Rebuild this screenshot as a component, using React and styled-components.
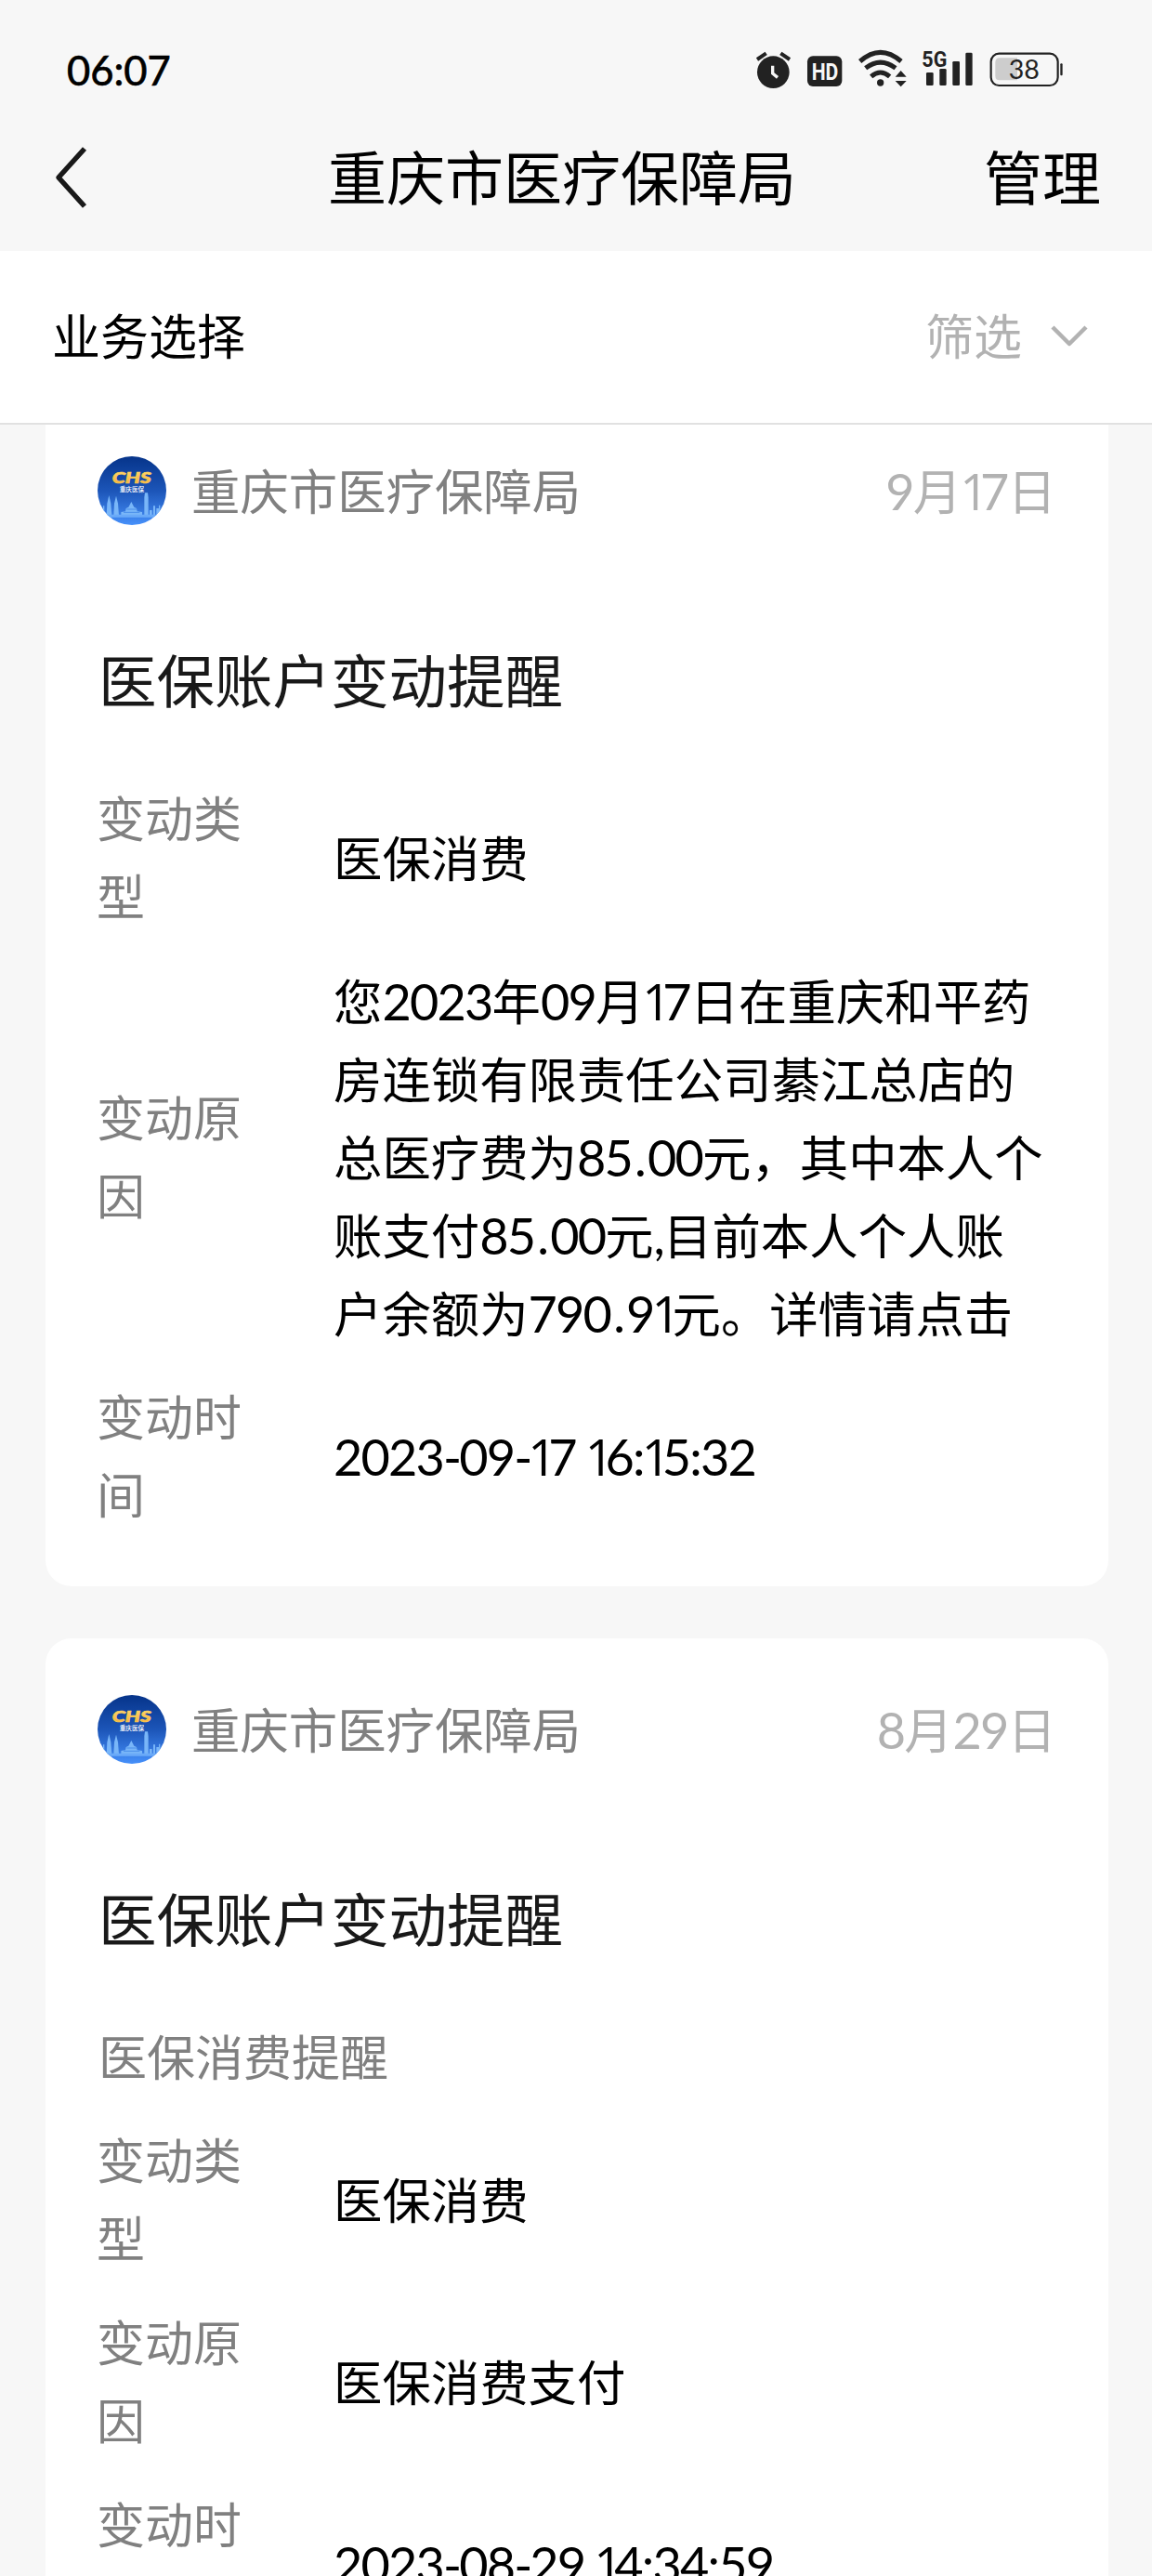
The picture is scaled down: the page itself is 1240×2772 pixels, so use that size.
import React, { Fragment } from 'react';
import styled, { createGlobalStyle } from 'styled-components';

const GlobalStyle = createGlobalStyle`
  * {
    box-sizing: border-box;
  }

  body {
    margin: 0;
    background-color: #f7f7f7;
    font-family: 'Noto Sans CJK SC', sans-serif;
    font-weight: 400;
  }
`;

const Page = styled.div`
  width: 1240px;
  height: 2772px;
  display: flex;
  flex-direction: column;
  overflow: hidden;
`;

const StatusBar = styled.div`
  flex: none;
  height: 124px;
  padding: 25px 96px 0 72px;
  display: flex;
  justify-content: space-between;
  align-items: center;
`;

const Time = styled.div`
  font-family: Lato, sans-serif;
  font-size: 43.5px;
  line-height: 52px;
  color: #000;
  -webkit-text-stroke: 0.7px #000;
`;

const StatusIcons = styled.div`
  display: flex;
  align-items: center;
  gap: 17.7px;

  & svg {
    display: block;
    height: 45px;
    overflow: visible;
  }
`;

const NavBar = styled.div`
  flex: none;
  height: 146px;
  padding: 0 55px 13px 58px;
  display: grid;
  grid-template-columns: 295px 1fr auto;
  align-items: center;
  font-size: 63px;
  line-height: 84px;
  color: #000;
`;

const NavText = styled.div`
  padding-bottom: 5px;
`;

const FilterBar = styled.div`
  flex: none;
  height: 187px;
  padding: 0 68px 6px 56px;
  display: flex;
  align-items: center;
  justify-content: space-between;
  background-color: #fff;
  border-bottom: 2px solid #e1e1e1;
  font-size: 52px;
  line-height: 84px;
  color: #000;
`;

const Filter = styled.div`
  display: flex;
  align-items: center;
  gap: 30px;
  color: #b2b2b2;

  & svg {
    margin-top: 4px;
  }
`;

const Scroller = styled.div`
  flex: 1;
  min-height: 0;
  overflow: hidden;
`;

const List = styled.div`
  margin: -27px 47px 0 49px;
  display: flex;
  flex-direction: column;
  gap: 56px;
`;

const Card = styled.div`
  padding: 61px 56px 58px;
  border-radius: 28px;
  background-color: #fff;
`;

const CardHead = styled.div`
  display: flex;
  align-items: flex-start;
  height: 74px;
  font-size: 52.4px;
  line-height: 70px;
`;

const Org = styled.div`
  flex: 1;
  margin-left: 27px;
  color: #808080;
`;

const DateText = styled.div`
  color: #b2b2b2;
`;

const Title = styled.div`
  margin: 123px 0 65px 1px;
  font-size: 62.5px;
  line-height: 84px;
  color: #191919;
`;

const SubTitle = styled.div`
  margin: 0 0 27px 1px;
  font-size: 52px;
  line-height: 84px;
  color: #808080;
`;

const Rows = styled.div`
  display: flex;
  flex-direction: column;
  gap: 28px;
`;

const Row = styled.div`
  display: flex;
  align-items: center;
  font-size: 52px;
  line-height: 84px;
`;

const Label = styled.div`
  flex: none;
  width: 170px;
  margin: 0 85px 0 -1px;
  color: #808080;
`;

const Value = styled.div`
  white-space: pre;
  font-size: 52.4px;
  color: #000;
`;

const Digits = styled.span`
  font-family: Lato, sans-serif;
  font-size: 54px;
  line-height: 1;
  letter-spacing: -1.8px;
`;

// Lato draws "1" with a foot, Open Sans has the plain one
const One = styled.span`
  margin-left: -2px;
  font-family: 'Open Sans', sans-serif;
  letter-spacing: -9px;
`;

const Dot = styled.span`
  margin: 0 3px 0 3px;
`;

const Hyphen = styled.span`
  letter-spacing: -3px;
`;

const marks = { 1: One, '.': Dot, '-': Hyphen };

const Text = ({ children }) =>
  children.split(/([\d.,:\- ]+)/).map((part, i) =>
    i % 2 ? (
      <Digits key={i}>
        {part.split(/([1.-])/).map((s, j) => {
          const Mark = marks[s] || Fragment;
          return <Mark key={j}>{s}</Mark>;
        })}
      </Digits>
    ) : (
      <Fragment key={i}>{part}</Fragment>
    )
  );

const AlarmIcon = () => (
  <svg viewBox="104 65 112 135" fill="#222">
    <circle cx="159" cy="142" r="52" />
    <path d="M107 101 L136 81 M183 81 L212 101" stroke="#222" strokeWidth="12" />
    <path d="M157 121 V146 L173 159" fill="none" stroke="#f7f7f7" strokeWidth="10" />
  </svg>
);

const HdIcon = () => (
  <svg viewBox="271 65 112 135">
    <rect x="271" y="90" width="112" height="98" rx="18" fill="#222" />
    <text
      x="285"
      y="166"
      fill="#f7f7f7"
      fontFamily="Roboto, sans-serif"
      fontWeight="700"
      fontSize="76"
      textLength="86"
      lengthAdjust="spacingAndGlyphs"
    >
      HD
    </text>
  </svg>
);

const WifiIcon = () => (
  <svg viewBox="440 65 156 135" fill="#222">
    <g fill="none" stroke="#222" strokeWidth="15">
      <path d="M445 107 Q511 49 578 107" />
      <path d="M463 129 Q511 92 560 129" />
      <path d="M481 156 Q511 130 541 156" />
    </g>
    <circle cx="511" cy="176" r="11" />
    <path d="M559 157 L577 137 L595 157 Z M559 170 H595 L577 189 Z" />
  </svg>
);

const SignalIcon = () => (
  <svg viewBox="643 65 163 135" fill="#222">
    <text
      x="641"
      y="125"
      fontFamily="Roboto, sans-serif"
      fontWeight="700"
      fontSize="71"
      textLength="81"
      lengthAdjust="spacingAndGlyphs"
    >
      5G
    </text>
    <rect x="655" y="143" width="23" height="42" rx="4" />
    <rect x="698" y="131" width="22" height="54" rx="4" />
    <rect x="740" y="107" width="23" height="78" rx="4" />
    <rect x="782" y="79" width="22" height="106" rx="4" />
  </svg>
);

const BatteryIcon = () => (
  <svg viewBox="857 65 236 135">
    <rect x="862" y="82" width="216" height="103" rx="26" fill="none" stroke="#222" strokeWidth="6.5" />
    <path d="M947 96 V168 H890 Q876 168 876 154 V110 Q876 96 890 96 Z" fill="#cdcdcd" />
    <rect x="1086" y="114" width="7" height="39" rx="3" fill="#222" />
    <text x="969" y="163" fill="#222" textAnchor="middle" fontFamily="Lato, sans-serif" fontSize="86">
      38
    </text>
  </svg>
);

const BackIcon = () => (
  <svg width="38" height="66" viewBox="0 0 38 66" fill="none" stroke="#191919" strokeWidth="5.5">
    <path d="M33 2 L5 33 L33 64" strokeLinejoin="round" />
  </svg>
);

const ChevronIcon = () => (
  <svg width="42" height="26" viewBox="0 0 42 26" fill="none" stroke="#b2b2b2" strokeWidth="4.5">
    <path d="M3 3 L21 21 L39 3" strokeLinejoin="round" />
  </svg>
);

const Logo = ({ id }) => (
  <svg width="74" height="74" viewBox="0 0 222 222">
    <defs>
      <linearGradient id={`sky-${id}`} x1="0" y1="0" x2="0" y2="1">
        <stop offset="0" stopColor="#06348a" />
        <stop offset="0.5" stopColor="#1c55b8" />
        <stop offset="1" stopColor="#4690fa" />
      </linearGradient>
      <linearGradient id={`gold-${id}`} x1="0" y1="0" x2="0" y2="1">
        <stop offset="0" stopColor="#ffe27a" />
        <stop offset="1" stopColor="#f3a62c" />
      </linearGradient>
      <clipPath id={`disc-${id}`}>
        <circle cx="111" cy="111" r="111" />
      </clipPath>
    </defs>
    <g clipPath={`url(#disc-${id})`}>
      <rect width="222" height="222" fill={`url(#sky-${id})`} />
      <g fill="#79b6f8">
        <path d="M29 192 L31 152 L37 126 L43 152 L46 192 Z" />
        <path d="M52 192 L54 152 L60 128 L66 152 L69 192 Z" />
        <path d="M76 192 V180 L90 178 L92 168 L100 164 L109 147 L118 164 L126 168 L128 178 L144 180 V192 Z" />
        <path d="M151 192 V132 L153 118 H162 L164 132 V192 Z" />
        <path d="M10 192 V172 H18 V160 H22 V192 Z M168 192 V174 H176 V192 Z M180 192 V160 H186 V192 Z M190 192 V168 H198 V158 H202 V192 Z" />
      </g>
      <path d="M84 181 H136 M94 171 H126" stroke="#4a8eea" strokeWidth="3" />
      <path d="M0 188 H222 V197 H0 Z" fill="#6aaaf8" />
      <text
        x="47"
        y="88"
        fill={`url(#gold-${id})`}
        stroke="#ffcf55"
        strokeWidth="2"
        fontFamily="Lato, sans-serif"
        fontStyle="italic"
        fontWeight="900"
        fontSize="52"
        textLength="126"
        lengthAdjust="spacingAndGlyphs"
      >
        CHS
      </text>
      <text x="71" y="114" fill="#fff" fontWeight="500" fontSize="20" fontFamily="'Noto Sans CJK SC', sans-serif">
        重庆医保
      </text>
    </g>
  </svg>
);

const messages = [
  {
    id: 1,
    date: '9月17日',
    rows: [
      ['变动类型', '医保消费'],
      [
        '变动原因',
        '您2023年09月17日在重庆和平药\n房连锁有限责任公司綦江总店的\n总医疗费为85.00元，其中本人个\n账支付85.00元,目前本人个人账\n户余额为790.91元。详情请点击',
      ],
      ['变动时间', '2023-09-17 16:15:32'],
    ],
  },
  {
    id: 2,
    date: '8月29日',
    subTitle: '医保消费提醒',
    rows: [
      ['变动类型', '医保消费'],
      ['变动原因', '医保消费支付'],
      ['变动时间', '2023-08-29 14:34:59'],
    ],
  },
];

const App = () => (
  <Page>
    <GlobalStyle />
    <StatusBar>
      <Time>06:07</Time>
      <StatusIcons>
        <AlarmIcon />
        <HdIcon />
        <WifiIcon />
        <SignalIcon />
        <BatteryIcon />
      </StatusIcons>
    </StatusBar>
    <NavBar>
      <BackIcon />
      <NavText>重庆市医疗保障局</NavText>
      <NavText>管理</NavText>
    </NavBar>
    <FilterBar>
      <div>业务选择</div>
      <Filter>
        筛选
        <ChevronIcon />
      </Filter>
    </FilterBar>
    <Scroller>
      <List>
        {messages.map((msg) => (
          <Card key={msg.id}>
            <CardHead>
              <Logo id={msg.id} />
              <Org>重庆市医疗保障局</Org>
              <DateText>
                <Text>{msg.date}</Text>
              </DateText>
            </CardHead>
            <Title>医保账户变动提醒</Title>
            {msg.subTitle && <SubTitle>{msg.subTitle}</SubTitle>}
            <Rows>
              {msg.rows.map(([label, value]) => (
                <Row key={label}>
                  <Label>{label}</Label>
                  <Value>
                    <Text>{value}</Text>
                  </Value>
                </Row>
              ))}
            </Rows>
          </Card>
        ))}
      </List>
    </Scroller>
  </Page>
);

export default App;
